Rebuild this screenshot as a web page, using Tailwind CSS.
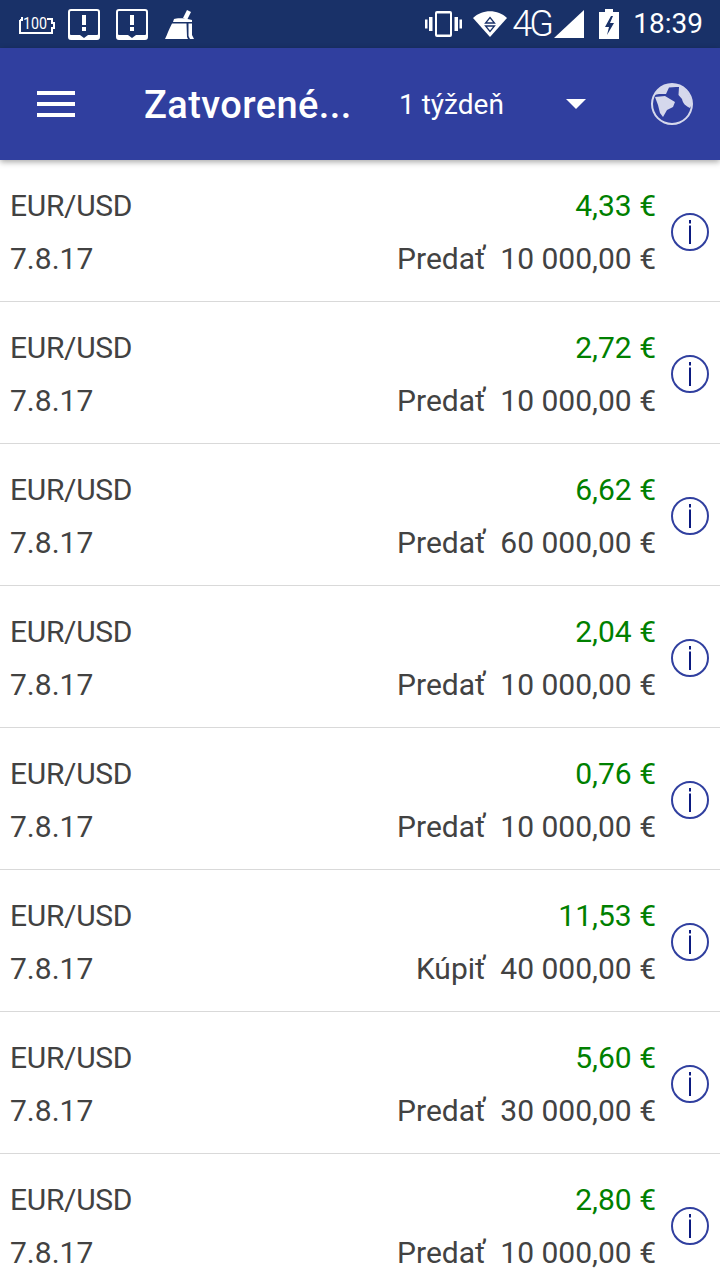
<!DOCTYPE html>
<html lang="en">
<head>
  <meta charset="UTF-8" />
  <title>Zatvorené</title>
  <script src="https://cdn.jsdelivr.net/npm/@tailwindcss/browser@4"></script>
</head>
<body class="bg-white w-[720px] h-[1280px] overflow-hidden font-['Roboto',sans-serif]">

  <!-- status bar -->
  <div class="h-12 bg-[#193168] flex items-center pl-[18px] pr-[17px] text-white">
    <svg width="37" height="20" viewBox="0 0 37 20" fill="none" stroke="white" stroke-width="2" class="mr-[13px]">
      <path d="M2 6v13h32v-5h2V9h-2V5h-5" />
      <path d="M2 6h2V3" />
      <text x="5" y="15" font-size="17" font-weight="400" fill="white" stroke="none" font-family="Roboto" textLength="24" lengthAdjust="spacingAndGlyphs">100</text>
    </svg>
    <svg width="32" height="31" viewBox="0 0 32 31" class="mr-4">
      <path fill="white" d="M3 0h26a3 3 0 0 1 3 3v25a3 3 0 0 1-3 3H3a3 3 0 0 1-3-3V3a3 3 0 0 1 3-3zM3 2a1 1 0 0 0-1 1v22a1 1 0 0 0 1 1h9l4 3 4-3h9a1 1 0 0 0 1-1V3a1 1 0 0 0-1-1z" fill-rule="evenodd" />
      <path fill="white" d="M14 6h4v10h-4zM14 18h4v4h-4z" />
    </svg>
    <svg width="32" height="31" viewBox="0 0 32 31" class="mr-[17px]">
      <path fill="white" d="M3 0h26a3 3 0 0 1 3 3v25a3 3 0 0 1-3 3H3a3 3 0 0 1-3-3V3a3 3 0 0 1 3-3zM3 2a1 1 0 0 0-1 1v22a1 1 0 0 0 1 1h9l4 3 4-3h9a1 1 0 0 0 1-1V3a1 1 0 0 0-1-1z" fill-rule="evenodd" />
      <path fill="white" d="M14 6h4v10h-4zM14 18h4v4h-4z" />
    </svg>
    <svg width="30" height="30" viewBox="0 0 30 30" fill="white">
      <path d="M22 1l4 2-4 8-4-2z" />
      <path d="M9 10c3-1 11-1 18 1v2H8z" />
      <path d="M7 14.500h14.500L22 28l1 2H0c2-4 4-10 7-15.500z" />
      <path d="M23.500 14.500H27V26l2 4h-4l-1.500-3z" />
    </svg>
    <div class="flex-1"></div>
    <svg width="38" height="26" viewBox="0 0 38 26" fill="white" class="mr-[10px]">
      <path d="M10 2a2 2 0 0 1 2-2h13a2 2 0 0 1 2 2v22a2 2 0 0 1-2 2H12a2 2 0 0 1-2-2zM12 2.500v21h13v-21z" fill-rule="evenodd" />
      <path d="M4 6h3.500v14H4zM0 8.500h2.500v9H0zM29.500 6H33v14h-3.500zM34.500 8.500H37v9h-2.500z" />
    </svg>
    <svg width="34" height="26" viewBox="0 0 34 26" class="mr-[5px]">
      <path fill="white" d="M0 7C9-2 25-2 34 7L17 26z" />
      <path fill="none" stroke="#193168" stroke-width="1.300" d="M17 6.500l4.500 5.500h-9zM12.500 15h9L17 20.500z" />
    </svg>
    <span class="w-[38px] text-[36px] leading-none tracking-[-3px] font-light mr-[4px]">4G</span>
    <svg width="30" height="28" viewBox="0 0 30 28" class="mr-[15px]"><path fill="white" d="M30 0v28H0z" /></svg>
    <svg width="20" height="30" viewBox="0 0 20 30" class="mr-[14px]">
      <path fill="white" d="M6 0h8v3h6v27H0V3h6z" />
      <path fill="#193168" d="M12 7l-6 11h4l-2 8 7-12h-4l3-7z" />
    </svg>
    <span class="text-[28px] leading-none">18:39</span>
  </div>

  <!-- app bar -->
  <div class="h-28 bg-[#303f9f] flex items-center relative z-10 shadow-[0_2px_6px_rgba(0,0,0,0.35)] text-white">
    <div class="w-[144px] pl-[37px] shrink-0">
      <div class="w-[38px] flex flex-col gap-[7px]">
        <div class="h-1 bg-white"></div>
        <div class="h-1 bg-white"></div>
        <div class="h-1 bg-white"></div>
      </div>
    </div>
    <div class="w-[255px] text-[38px] tracking-[0.4px] font-medium leading-none whitespace-nowrap mt-[2px]">Zatvorené...</div>
    <div class="w-[167px] text-[28px] leading-none mt-[2px]">1 týždeň</div>
    <div class="w-0 h-0 border-x-[10px] border-x-transparent border-t-[10px] border-t-white"></div>
    <svg width="44" height="44" viewBox="0 0 44 44" class="ml-[64px]" fill="#d5d8ec">
      <path fill-rule="evenodd" d="M22 1a21 21 0 1 1 0 42a21 21 0 0 1 0-42zM22 3a19 19 0 1 0 0 38a19 19 0 0 0 0-38z" />
      <path d="M4 13C8 6 14 2 24 2c9 1 17 9 18 20l-2 4c-4-2-7-4-8-9l-3.500-4 .5-8h-3l-7 .5-3 6.500H9z" />
      <path d="M5 15l10-1 10 6-2 5-6 3-4 7-3-4-2-8z" />
    </svg>
  </div>

  <!-- closed positions -->
  <div>
    <div class="h-[142px] border-b border-[#d9d9d9] flex items-center pl-[10px] pr-[11px] text-[#424242] text-[30px] leading-none">
      <div class="flex-1 flex flex-col gap-[23px] mt-[4px]"><span class="tracking-[-0.3px]">EUR/USD</span><span>7.8.17</span></div>
      <div class="flex flex-col gap-[23px] items-end mt-[4px] mr-[15px]"><span class="text-[#008000]">4,33 €</span><span>Predať&nbsp; 10 000,00 €</span></div>
      <svg width="38" height="38" viewBox="0 0 38 38" fill="none" class="mt-[2px]"><circle cx="19" cy="19" r="18" stroke="#303f9f" stroke-width="2" /><path d="M19 7v3.500M19 12.500V31" stroke="#0b1a80" stroke-width="2" /></svg>
    </div>
    <div class="h-[142px] border-b border-[#d9d9d9] flex items-center pl-[10px] pr-[11px] text-[#424242] text-[30px] leading-none">
      <div class="flex-1 flex flex-col gap-[23px] mt-[4px]"><span class="tracking-[-0.3px]">EUR/USD</span><span>7.8.17</span></div>
      <div class="flex flex-col gap-[23px] items-end mt-[4px] mr-[15px]"><span class="text-[#008000]">2,72 €</span><span>Predať&nbsp; 10 000,00 €</span></div>
      <svg width="38" height="38" viewBox="0 0 38 38" fill="none" class="mt-[2px]"><circle cx="19" cy="19" r="18" stroke="#303f9f" stroke-width="2" /><path d="M19 7v3.500M19 12.500V31" stroke="#0b1a80" stroke-width="2" /></svg>
    </div>
    <div class="h-[142px] border-b border-[#d9d9d9] flex items-center pl-[10px] pr-[11px] text-[#424242] text-[30px] leading-none">
      <div class="flex-1 flex flex-col gap-[23px] mt-[4px]"><span class="tracking-[-0.3px]">EUR/USD</span><span>7.8.17</span></div>
      <div class="flex flex-col gap-[23px] items-end mt-[4px] mr-[15px]"><span class="text-[#008000]">6,62 €</span><span>Predať&nbsp; 60 000,00 €</span></div>
      <svg width="38" height="38" viewBox="0 0 38 38" fill="none" class="mt-[2px]"><circle cx="19" cy="19" r="18" stroke="#303f9f" stroke-width="2" /><path d="M19 7v3.500M19 12.500V31" stroke="#0b1a80" stroke-width="2" /></svg>
    </div>
    <div class="h-[142px] border-b border-[#d9d9d9] flex items-center pl-[10px] pr-[11px] text-[#424242] text-[30px] leading-none">
      <div class="flex-1 flex flex-col gap-[23px] mt-[4px]"><span class="tracking-[-0.3px]">EUR/USD</span><span>7.8.17</span></div>
      <div class="flex flex-col gap-[23px] items-end mt-[4px] mr-[15px]"><span class="text-[#008000]">2,04 €</span><span>Predať&nbsp; 10 000,00 €</span></div>
      <svg width="38" height="38" viewBox="0 0 38 38" fill="none" class="mt-[2px]"><circle cx="19" cy="19" r="18" stroke="#303f9f" stroke-width="2" /><path d="M19 7v3.500M19 12.500V31" stroke="#0b1a80" stroke-width="2" /></svg>
    </div>
    <div class="h-[142px] border-b border-[#d9d9d9] flex items-center pl-[10px] pr-[11px] text-[#424242] text-[30px] leading-none">
      <div class="flex-1 flex flex-col gap-[23px] mt-[4px]"><span class="tracking-[-0.3px]">EUR/USD</span><span>7.8.17</span></div>
      <div class="flex flex-col gap-[23px] items-end mt-[4px] mr-[15px]"><span class="text-[#008000]">0,76 €</span><span>Predať&nbsp; 10 000,00 €</span></div>
      <svg width="38" height="38" viewBox="0 0 38 38" fill="none" class="mt-[2px]"><circle cx="19" cy="19" r="18" stroke="#303f9f" stroke-width="2" /><path d="M19 7v3.500M19 12.500V31" stroke="#0b1a80" stroke-width="2" /></svg>
    </div>
    <div class="h-[142px] border-b border-[#d9d9d9] flex items-center pl-[10px] pr-[11px] text-[#424242] text-[30px] leading-none">
      <div class="flex-1 flex flex-col gap-[23px] mt-[4px]"><span class="tracking-[-0.3px]">EUR/USD</span><span>7.8.17</span></div>
      <div class="flex flex-col gap-[23px] items-end mt-[4px] mr-[15px]"><span class="text-[#008000]">11,53 €</span><span>Kúpiť&nbsp; 40 000,00 €</span></div>
      <svg width="38" height="38" viewBox="0 0 38 38" fill="none" class="mt-[2px]"><circle cx="19" cy="19" r="18" stroke="#303f9f" stroke-width="2" /><path d="M19 7v3.500M19 12.500V31" stroke="#0b1a80" stroke-width="2" /></svg>
    </div>
    <div class="h-[142px] border-b border-[#d9d9d9] flex items-center pl-[10px] pr-[11px] text-[#424242] text-[30px] leading-none">
      <div class="flex-1 flex flex-col gap-[23px] mt-[4px]"><span class="tracking-[-0.3px]">EUR/USD</span><span>7.8.17</span></div>
      <div class="flex flex-col gap-[23px] items-end mt-[4px] mr-[15px]"><span class="text-[#008000]">5,60 €</span><span>Predať&nbsp; 30 000,00 €</span></div>
      <svg width="38" height="38" viewBox="0 0 38 38" fill="none" class="mt-[2px]"><circle cx="19" cy="19" r="18" stroke="#303f9f" stroke-width="2" /><path d="M19 7v3.500M19 12.500V31" stroke="#0b1a80" stroke-width="2" /></svg>
    </div>
    <div class="h-[142px] border-b border-[#d9d9d9] flex items-center pl-[10px] pr-[11px] text-[#424242] text-[30px] leading-none">
      <div class="flex-1 flex flex-col gap-[23px] mt-[4px]"><span class="tracking-[-0.3px]">EUR/USD</span><span>7.8.17</span></div>
      <div class="flex flex-col gap-[23px] items-end mt-[4px] mr-[15px]"><span class="text-[#008000]">2,80 €</span><span>Predať&nbsp; 10 000,00 €</span></div>
      <svg width="38" height="38" viewBox="0 0 38 38" fill="none" class="mt-[2px]"><circle cx="19" cy="19" r="18" stroke="#303f9f" stroke-width="2" /><path d="M19 7v3.500M19 12.500V31" stroke="#0b1a80" stroke-width="2" /></svg>
    </div>
  </div>

</body>
</html>
